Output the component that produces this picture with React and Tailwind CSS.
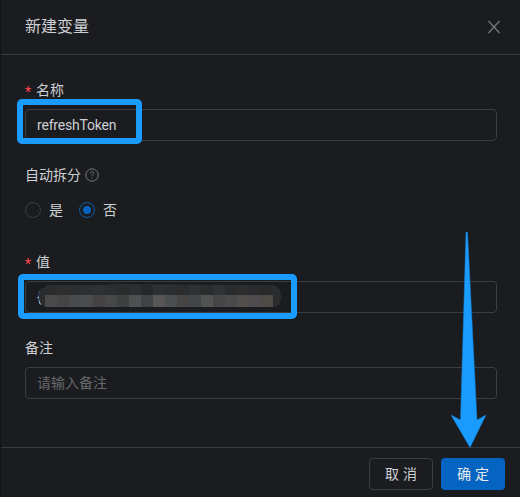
const FONT = 'font-["Roboto","Noto_Sans_CJK_SC",sans-serif]'

// mosaic cells over the masked value
const MOSAIC_TOP = ['#2a2c2e', '#2c2e30', '#2b2d2f', '#2d3032', '#2f3234', '#2b2e30', '#2a2c2e', '#2c2e30', '#26282a', '#2e3133', '#2c2f31', '#2b2c2e', '#2e3234', '#2a2c2d', '#303335', '#292b2d', '#2c2e30', '#2a2b2d', '#28292b']
const MOSAIC_BOTTOM = ['#4a4a4b', '#454546', '#484a4c', '#4a4c4e', '#444242', '#464849', '#3f4141', '#4d5152', '#414243', '#575654', '#4b4f50', '#474543', '#434648', '#525452', '#464646', '#4a4a4a', '#514e4c', '#4f4c50', '#4e4b47']

function Label({ required, children }) {
  return (
    <label className="flex items-center h-[22px] text-sm text-[#cdd0d4] mb-2">
      {required && <span className="text-[#ff4450] text-sm w-[11px] pt-1 leading-none">*</span>}
      {children}
    </label>
  )
}

function Field({ children, muted }) {
  return (
    <div className={`h-8 flex items-center px-[11px] text-sm tracking-[-0.2px] border border-[#3c3d40] rounded-sm ${muted ? 'text-[#66686b] tracking-normal' : 'text-[#cdd0d4]'}`}>
      {children}
    </div>
  )
}

function Radio({ checked, children }) {
  return (
    <span className="flex items-center gap-2 text-sm text-[#cdd0d4]">
      {checked ? (
        <span className="w-4 h-4 rounded-full border border-[#0f5fa8] flex items-center justify-center">
          <span className="w-2 h-2 rounded-full bg-[#0564c1]"></span>
        </span>
      ) : (
        <span className="w-4 h-4 rounded-full border border-[#3c3d40]"></span>
      )}
      {children}
    </span>
  )
}

export default function App() {
  return (
    <div className={`relative w-[520px] h-[497px] overflow-hidden bg-[#1b1c1f] border-l border-[#141517] ${FONT}`}>
      <header className="h-[55px] flex items-center justify-between pl-6 pr-[19px] border-b border-[#3a3b3e]">
        <h1 className="text-base text-[#cdd0d4]">新建变量</h1>
        <svg width="14" height="14" viewBox="0 0 14 14" fill="none" stroke="#77797c" strokeWidth="1.2">
          <path d="M1.500 1l11 12M12.500 1l-11 12" />
        </svg>
      </header>

      <div className="pt-6 pl-6 pr-[23px]">
        <Label required>名称</Label>
        <Field>refreshToken</Field>

        <div className="mt-[23px]">
          <label className="flex items-center gap-1 h-[22px] text-sm text-[#cdd0d4]">
            自动拆分
            <svg width="14" height="14" viewBox="0 0 14 14" fill="none" stroke="#77797c">
              <circle cx="7" cy="7" r="6.200" />
              <path d="M5.200 5.400c0-1 .8-1.700 1.800-1.700s1.800.7 1.800 1.600c0 1.400-1.800 1.400-1.800 2.900" />
              <path d="M7 9.500v1" />
            </svg>
          </label>
          <div className="flex items-center gap-4 mt-[14px] h-5">
            <Radio>是</Radio>
            <Radio checked>否</Radio>
          </div>
        </div>

        <div className="mt-[31px]">
          <Label required>值</Label>
          <Field>{'{'}</Field>
        </div>

        <div className="mt-[24px]">
          <Label>备注</Label>
          <Field muted>请输入备注</Field>
        </div>
      </div>

      <footer className="absolute left-0 right-0 bottom-0 h-[50px] flex items-start justify-end gap-2 pt-[10px] pr-[15px] border-t border-[#3a3b3e]">
        <button className="w-16 h-8 pl-1 text-sm tracking-[4px] text-[#cdd0d4] border border-[#3c3d40] rounded-sm">取消</button>
        <button className="w-16 h-8 pl-1 text-sm tracking-[4px] text-[#e8eaec] bg-[#0564c1] rounded-sm">确定</button>
      </footer>

      {/* annotations drawn on top of the screenshot */}
      <div className="absolute left-[16px] top-[99px] w-[125px] h-[45px] border-[6px] border-[#1a9bff] rounded-[5px]"></div>
      <div className="absolute left-[17px] top-[274px] w-[279px] h-[45px] border-[6px] border-[#1a9bff] rounded-[5px]"></div>

      <svg className="absolute left-[37px] top-[283px]" width="244" height="25" viewBox="0 0 244 25">
        <path d="M1 16 Q-1 6 8 4 Q30 2 66 3 Q75 -1 85 1 L235 2 Q243 4 243 13 Q244 24 234 24 L8 24 Q2 23 1 16Z" fill="#2a2c2e" />
        {MOSAIC_TOP.map((c, i) => (
          <rect key={i} x={i * 12 + 7} y="2" width="12" height="10" fill={c} />
        ))}
        {MOSAIC_BOTTOM.map((c, i) => (
          <rect key={i} x={i * 12 + 7} y="12" width="12" height="12" fill={c} />
        ))}
      </svg>

      <svg className="absolute left-[450px] top-[231px]" width="36" height="218" viewBox="0 0 36 218">
        <path d="M15 1 L16.500 1 L26 189 L35 184 L19 216.500 L0 184 L9.500 189 Z" fill="#1a9bff" stroke="#1581d6" strokeWidth="0.5" />
      </svg>
    </div>
  )
}
